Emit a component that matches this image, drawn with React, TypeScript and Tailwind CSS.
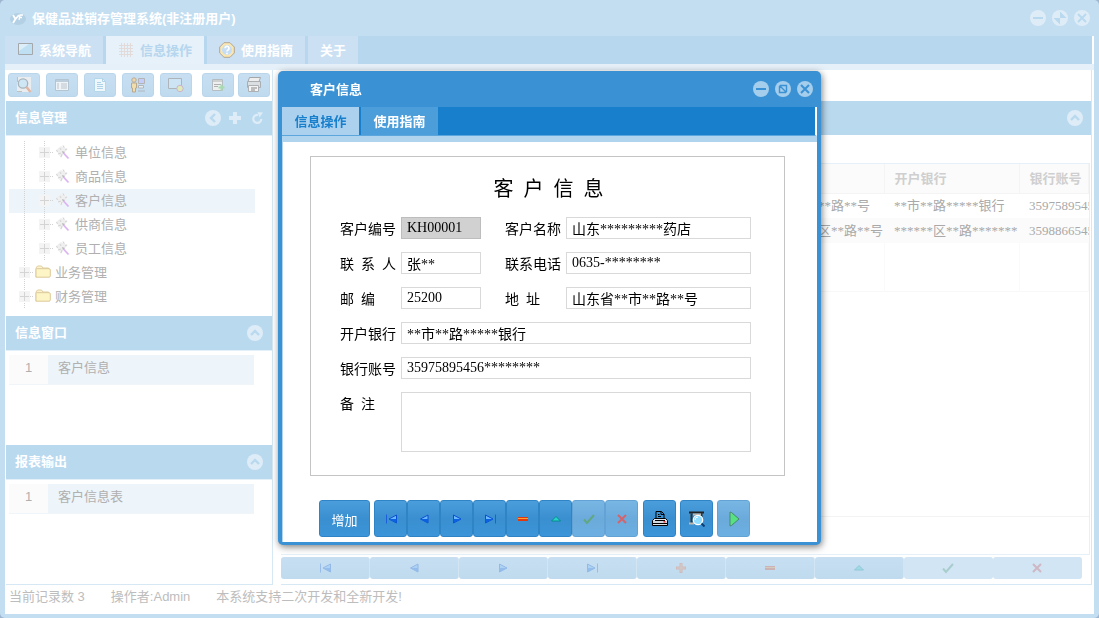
import { useId, type ReactNode } from "react";

const UI_FONT = "font-['Liberation_Sans','Noto_Sans_CJK_SC',sans-serif]";
const DATA_FONT = "font-['Liberation_Serif','Noto_Sans_CJK_SC',serif]";

/* ---------- round window controls ---------- */

type GlyphName = "minus" | "restore" | "maximize" | "close" | "up" | "left";

const glyphs: Record<GlyphName, ReactNode> = {
  minus: <path d="M3 8h10" strokeWidth="2" />,
  restore: <path d="M5 4.5h6.500V11M4.500 5v6.500H11M4.500 4.500l7 7" strokeWidth="1.4" />,
  maximize: (
    <g fill="currentColor" stroke="none">
      <path d="M8 1.500V8h6.500zM8 14.500V8H1.500z" />
    </g>
  ),
  close: <path d="M4 4l8 8M12 4l-8 8" strokeWidth="2" />,
  up: <path d="M4 10l4-4 4 4" strokeWidth="2.4" />,
  left: <path d="M10 4L6 8l4 4" strokeWidth="2.4" />,
};

function RoundButton({ glyph, label, tone }: { glyph: GlyphName; label: string; tone: string }) {
  return (
    <button type="button" aria-label={label} className={`size-4 shrink-0 ${tone}`}>
      <svg viewBox="0 0 16 16" className="size-4" fill="none" stroke="currentColor">
        <circle cx="8" cy="8" r="8" className="fill-[var(--disc)]" stroke="none" />
        {glyphs[glyph]}
      </svg>
    </button>
  );
}

const PALE = "text-[#b9d9ef] [--disc:#deecf7]";
const STRONG = "text-[#3a92d4] [--disc:#a5cdec]";

/* ---------- record navigation icons ---------- */

const navIcons: Record<string, ReactNode> = {
  first: (
    <>
      <path d="M3.500 3.500v9" stroke="#1c5fd8" />
      <path d="M13.500 4v8L6 8z" fill="#69b7ff" stroke="#0a4fcf" />
      <path d="M13.500 8v4L6 8z" fill="#0a62e0" />
    </>
  ),
  prev: (
    <>
      <path d="M12 4v8L4.500 8z" fill="#69b7ff" stroke="#0a4fcf" />
      <path d="M12 8v4L4.500 8z" fill="#0a62e0" />
    </>
  ),
  next: (
    <>
      <path d="M4.500 4v8L12 8z" fill="#69b7ff" stroke="#0a4fcf" />
      <path d="M4.500 8v4L12 8z" fill="#0a62e0" />
    </>
  ),
  last: (
    <>
      <path d="M13.500 3.500v9" stroke="#1c5fd8" />
      <path d="M3.500 4v8L11 8z" fill="#69b7ff" stroke="#0a4fcf" />
      <path d="M3.500 8v4L11 8z" fill="#0a62e0" />
    </>
  ),
  add: (
    <>
      <path d="M8 3v10M3 8h10" stroke="#ff5a1e" strokeWidth="3" />
      <path d="M8 4v8M4 8h8" stroke="#ffa060" />
    </>
  ),
  remove: (
    <g shapeRendering="crispEdges">
      <rect x="3" y="6" width="10" height="4" fill="#e03a0c" />
      <rect x="3" y="7" width="10" height="1" fill="#ffa030" />
    </g>
  ),
  edit: <path d="M8 5.500l4.500 4.500h-9z" fill="#27d3c8" stroke="#078a90" />,
  post: <path d="M3 8.500L6 12l7-8" fill="none" stroke="#2d8a58" strokeWidth="2" />,
  cancel: <path d="M4 4l8 8M12 4l-8 8" stroke="#c8303a" strokeWidth="2" />,
};

function NavIcon({ name, faded }: { name: string; faded?: boolean }) {
  return (
    <svg viewBox="0 0 16 16" aria-hidden="true" className={faded ? "size-4 opacity-25" : "size-4"}>
      {navIcons[name]}
    </svg>
  );
}

function PrinterIcon() {
  return (
    <svg viewBox="0 0 16 16" className="size-4" aria-hidden="true">
      <path d="M4 8V.5h5.500L12 3v5z" fill="#3a92d4" stroke="#000" />
      <path d="M9 1v2.500h3M6 3.500h1.500M6 5.500h3" fill="none" stroke="#000" />
      <path d="M2.500 7.500h11l2 2v5H.5v-5z" fill="#dfe4ea" stroke="#000" />
      <path d="M1 12.500h14M3 9.500h10" stroke="#000" />
      <path d="M1 11h14" stroke="#c5ccd6" />
      <rect x="11.500" y="10" width="2" height="1.500" fill="#e33" />
    </svg>
  );
}

function PreviewIcon() {
  return (
    <svg viewBox="0 0 16 16" className="size-4" aria-hidden="true">
      <path d="M0 1.500h15" stroke="#222" strokeWidth="2" />
      <path d="M2.500 2.500v10M12.500 2v4" stroke="#333" strokeWidth="2" />
      <path d="M4 3.500h8M0 12.500h5" stroke="#bdb7b0" strokeWidth="2" />
      <circle cx="9" cy="9" r="4.700" fill="#8fdcff" stroke="#fff" strokeWidth="1.200" />
      <path d="M6 9a3 3 0 0 1 3-3" stroke="#fff" fill="none" />
      <path d="M12.500 12.500l3 3" stroke="#0b3f74" strokeWidth="2" />
    </svg>
  );
}

function PlayIcon() {
  return (
    <svg viewBox="0 0 16 16" className="size-4" aria-hidden="true">
      <path d="M4 1v14l1.500-.5L13 8 5.500 1.500z" fill="#1fd858" stroke="#10603f" />
    </svg>
  );
}

/* ---------- toolbar icons ---------- */

const toolIcons: { label: string; icon: ReactNode }[] = [
  {
    label: "查询",
    icon: (
      <>
        <path d="M1 0h14v15H1z" fill="#e9edef" />
        <circle cx="7" cy="6.500" r="4.700" fill="#cfe6f5" stroke="#a8b4bc" strokeWidth="1.300" />
        <path d="M10.500 10l4 5" stroke="#e2b4a2" strokeWidth="2.400" />
        <path d="M1.500 0v5M1 14.500h5" stroke="#c0c0c0" />
      </>
    ),
  },
  {
    label: "列表",
    icon: (
      <>
        <path d="M1.500 2.500h13v11h-13z" fill="#eef3f7" stroke="#b3c4d2" />
        <path d="M2 4h12" stroke="#bccddb" strokeWidth="2" />
        <path d="M3 7h2M3 9h2M3 11h2M7 7h6M7 9h6M7 11h6" stroke="#bcc4cb" />
      </>
    ),
  },
  {
    label: "文档",
    icon: (
      <>
        <path d="M2.500 1.500h8l3 3v10h-11z" fill="#eef7fb" stroke="#b4d7ea" />
        <path d="M10.500 1.500v3h3M5 5.500h4M5 7.500h6M5 9.500h6M5 11.500h6" stroke="#aed3e8" fill="none" />
      </>
    ),
  },
  {
    label: "用户",
    icon: (
      <>
        <path d="M8.500 1.500h6v5h-6z" fill="#c5cdfb" stroke="#b4b4b4" />
        <circle cx="4" cy="3" r="2.200" fill="#efd6a8" stroke="#b5ac9d" />
        <path d="M1.500 6h5v5h-1v4h-3v-4h-1z" fill="#f1dcae" stroke="#b9a98d" />
        <path d="M8.500 8.500h5v2.500H8.500zM8 14h7" stroke="#b1b6bc" fill="#e8edf0" />
      </>
    ),
  },
  {
    label: "预览",
    icon: (
      <>
        <path d="M.5 1.500h13v10H.5z" fill="#cce4f3" stroke="#aeb5ba" />
        <circle cx="12" cy="11.500" r="3.200" fill="#e0e9b8" stroke="#cbb3cf" />
      </>
    ),
  },
  {
    label: "导出",
    icon: (
      <>
        <path d="M2.500 2.500h10v11h-10z" fill="#eef0f0" stroke="#b5bcc2" />
        <path d="M3 4h9M4 7.500h7M4 9.500h4" stroke="#b0b0b0" />
        <path d="M11.500 7.500v6M8.500 10.500h6" stroke="#a6dcae" strokeWidth="2" />
      </>
    ),
  },
  {
    label: "打印",
    icon: (
      <>
        <path d="M3.500.5h11l-1.500 4H2z" fill="#eee" stroke="#a3a7aa" />
        <path d="M1.500 4.500h13v6h-13z" fill="#dcdfe1" stroke="#a9aeb2" />
        <path d="M2.500 8.500h10v6h-10z" fill="#f4f4f4" stroke="#adb1b5" />
        <path d="M5 11h6M5 13h4" stroke="#aaa" strokeWidth="1.500" />
      </>
    ),
  },
];

function ToolButton({ index }: { index: number }) {
  const tool = toolIcons[index];
  return (
    <button
      type="button"
      aria-label={tool.label}
      className="flex h-6 w-8 items-center justify-center rounded-[3px] border border-[#b9d6eb] bg-linear-to-b from-[#c8dff2] to-[#bfdaee]"
    >
      <svg viewBox="0 0 16 16" className="size-4" aria-hidden="true">
        {tool.icon}
      </svg>
    </button>
  );
}

/* ---------- main window tabs ---------- */

function MainTab({ label, icon, active }: { label: string; icon?: ReactNode; active?: boolean }) {
  return (
    <button
      type="button"
      role="tab"
      aria-selected={!!active}
      className={`flex h-full items-center gap-1.5 px-3 text-[13px] font-bold ${
        active ? "bg-[#e6f1f9] text-[#b5d6ee]" : "bg-[#cbe1f3] text-white"
      }`}
    >
      {icon}
      <span className="pt-0.5">{label}</span>
    </button>
  );
}

const navIcon = (
  <svg viewBox="0 0 16 16" className="size-4" aria-hidden="true">
    <path d="M1.500 1.500h14v11h-14z" fill="#bfe0f2" stroke="#a4a8ab" />
    <path d="M2 2h10L2 9z" fill="#dceef7" />
  </svg>
);
const gridIcon = (
  <svg viewBox="0 0 16 16" className="size-4" aria-hidden="true">
    <path
      d="M1 3.500h14M1 6.500h14M1 9.500h14M1 12.500h14M3.500 1v14M6.500 1v14M9.500 1v14M12.500 1v14"
      stroke="#e2dbda"
    />
  </svg>
);
const helpIcon = (
  <svg viewBox="0 0 16 16" className="size-4" aria-hidden="true">
    <path d="M5 .7h6L15.300 5v6L11 15.300H5L.7 11V5z" fill="#fae6b0" stroke="#b0a698" />
    <circle cx="8" cy="8" r="5" fill="#c5def5" />
    <path d="M6 6.300a2 2 0 1 1 3 1.700q-1 .5-1 1.500M8 10.800v1.500" stroke="#fff" strokeWidth="1.700" fill="none" />
  </svg>
);

/* ---------- sidebar ---------- */

function PanelHeader({ title, children }: { title: string; children: ReactNode }) {
  return (
    <header className="flex h-[35px] shrink-0 items-center justify-between border-b border-[#e4f0f9] bg-[#b9d9ef] px-[9px] text-[13px] text-white">
      <h2 className="font-bold">{title}</h2>
      <div className="flex items-center gap-2">{children}</div>
    </header>
  );
}

function Expander() {
  return (
    <svg viewBox="0 0 15 24" className="h-6 w-[15px] shrink-0" aria-hidden="true" shapeRendering="crispEdges">
      <path d="M5.500 0v24" stroke="#d2d2d2" strokeDasharray="1 1" />
      <rect x="0" y="6" width="11" height="11" fill="#f4f4f4" />
      <path d="M5.500 7v9M1 11.500h9" stroke="#d4d4d4" />
      <path d="M11 11.500h3" stroke="#d2d2d2" strokeDasharray="1 1" />
    </svg>
  );
}

function WandIcon() {
  return (
    <svg viewBox="0 0 16 16" className="size-4 shrink-0" aria-hidden="true">
      <path d="M1 5l5-4 2 1 1-2 1 3 3 1-3 3-4 6z" fill="#efefef" />
      <path d="M1 5.500l2 1M5 3l1 2M8 .5l1 2M3 9l3-1M6 12l1-3M12 4l-2 1" stroke="#d4d4d4" />
      <path d="M7 6l3 1-2 2z" fill="#b8b8b8" />
      <path d="M8.500 8l5 5.500" stroke="#dcb4f2" strokeWidth="1.800" />
    </svg>
  );
}

function FolderIcon() {
  return (
    <svg viewBox="0 0 16 16" className="size-4 shrink-0" aria-hidden="true">
      <path d="M1 12.500V3l1.500-2h4L8 3h5.500v2" fill="#fbf3cf" stroke="#e0cf9f" />
      <path d="M1 12V4.500q0-.8.8-.8H14q1.300 0 1.300 1.200v6q0 1.300-1.300 1.300H2z" fill="#fdf5c6" stroke="#dcc99a" />
    </svg>
  );
}

const leaves = ["单位信息", "商品信息", "客户信息", "供商信息", "员工信息"];

function Tree() {
  return (
    <ul className="h-[180px] shrink-0 pt-[5px] pr-[17px] pl-[3px] text-[13px] text-[#b0b0b0]">
      {leaves.map((leaf) => (
        <li key={leaf} className={`flex h-6 items-center pl-2.5 ${leaf === "客户信息" ? "bg-[#edf4fa]" : ""}`}>
          <svg viewBox="0 0 20 24" className="h-6 w-5 shrink-0" aria-hidden="true" shapeRendering="crispEdges">
            <path d="M5.500 0v24" stroke="#d2d2d2" strokeDasharray="1 1" />
          </svg>
          <Expander />
          <span className="flex items-center gap-1 pl-px">
            <WandIcon />
            {leaf}
          </span>
        </li>
      ))}
      {["业务管理", "财务管理"].map((folder) => (
        <li key={folder} className="flex h-6 items-center pl-2.5">
          <Expander />
          <span className="flex items-center gap-1 pl-px">
            <FolderIcon />
            {folder}
          </span>
        </li>
      ))}
    </ul>
  );
}

function NumberedRow({ text }: { text: string }) {
  return (
    <ol className="mt-1 mr-[18px] ml-[3px] text-[13px] text-[#b0b0b0]">
      <li className="flex h-[30px] items-stretch border-b border-[#f0f5fa] leading-[26px]">
        <span className="w-[39px] bg-[#fbfbfb] text-center">1</span>
        <span className="flex-1 bg-[#edf4fa] pl-2.5">{text}</span>
      </li>
    </ol>
  );
}

function Sidebar() {
  return (
    <aside className="flex w-[267px] shrink-0 flex-col border-r border-b border-[#d7e8f5]">
      <div className="flex h-[31px] shrink-0 items-center justify-between pr-0.5 pb-px pl-0.5">
        <div className="flex gap-1.5">
          {[0, 1, 2, 3, 4].map((i) => (
            <ToolButton key={i} index={i} />
          ))}
        </div>
        <div className="flex gap-1">
          <ToolButton index={5} />
          <ToolButton index={6} />
        </div>
      </div>
      <PanelHeader title="信息管理">
        <RoundButton glyph="left" label="返回" tone={PALE} />
        <button type="button" aria-label="添加">
          <svg viewBox="0 0 12 12" className="size-3">
            <path d="M6 0v12M0 6h12" stroke="#deecf7" strokeWidth="4" />
          </svg>
        </button>
        <button type="button" aria-label="刷新" className="pl-0.5">
          <svg viewBox="0 0 12 12" className="size-3" fill="none">
            <path d="M7 3a4 4 0 1 0 3.300 4" stroke="#deecf7" strokeWidth="2.200" />
            <path d="M6.500 0L12 .5 8.500 5.500z" fill="#deecf7" />
          </svg>
        </button>
      </PanelHeader>
      <Tree />
      <PanelHeader title="信息窗口">
        <RoundButton glyph="up" label="收起信息窗口" tone={PALE} />
      </PanelHeader>
      <div className="h-[94px] shrink-0">
        <NumberedRow text="客户信息" />
      </div>
      <PanelHeader title="报表输出">
        <RoundButton glyph="up" label="收起报表输出" tone={PALE} />
      </PanelHeader>
      <div className="flex-1">
        <NumberedRow text="客户信息表" />
      </div>
    </aside>
  );
}

/* ---------- record table ---------- */

const records = [
  { address: "山东省**市**路**号", bank: "**市**路*****银行", account: "35975895456********" },
  { address: "山东省**市区**路**号", bank: "******区**路*******", account: "35988665456********" },
];

const navNames: [string, string][] = [
  ["first", "首条"],
  ["prev", "上一条"],
  ["next", "下一条"],
  ["last", "末条"],
  ["add", "新增"],
  ["remove", "删除"],
  ["edit", "编辑"],
  ["post", "保存"],
  ["cancel", "取消"],
];

const HEAD_CELL = "overflow-hidden border-r border-b border-[#f4f4f4] pl-2.5 font-bold";
const BODY_CELL = "overflow-hidden pl-2.5 leading-5";
const BLANK_CELL = "border-r border-[#fafafa]";

function RecordPanel() {
  return (
    <section className="flex min-w-0 flex-1 flex-col border-r border-b border-[#d7e8f5] pt-[31px]">
      <header className="flex h-[34px] shrink-0 items-center justify-end bg-[#b9d9ef] pr-2">
        <RoundButton glyph="up" label="收起" tone={PALE} />
      </header>
      <div className="mt-7 mr-px flex-1 overflow-hidden border-t border-r border-b border-[#e6f0f8]">
        <div className="h-[353px] border-b border-[#f3f3f3]">
          <table className="w-full table-fixed border-collapse text-left text-[13px] whitespace-nowrap text-[#a9a9a9]">
            <colgroup>
              <col className="w-[462px]" />
              <col className="w-[141px]" />
              <col className="w-[135px]" />
              <col />
            </colgroup>
            <thead className="bg-[#fbfbfb] text-[#cfcfcf]">
              <tr className="h-[29px]">
                <td className={HEAD_CELL} />
                <th className={HEAD_CELL}>地址</th>
                <th className={HEAD_CELL}>开户银行</th>
                <th className={HEAD_CELL}>银行账号</th>
              </tr>
            </thead>
            <tbody className={DATA_FONT}>
              {records.map((r) => (
                <tr key={r.account} className="h-[25px] even:bg-[#fbfbfb]">
                  <td className={BODY_CELL} />
                  <td className={BODY_CELL}>{r.address}</td>
                  <td className={BODY_CELL}>{r.bank}</td>
                  <td className={BODY_CELL}>{r.account}</td>
                </tr>
              ))}
              <tr className="h-12 border-b border-[#f8f8f8]">
                <td className={BLANK_CELL} />
                <td className={BLANK_CELL} />
                <td className={BLANK_CELL} />
                <td className={BLANK_CELL} />
              </tr>
            </tbody>
          </table>
        </div>
      </div>
      <div className="mt-0.5 mr-[9px] mb-[5px] flex h-[22px] shrink-0">
        {navNames.map(([name, label], i) => (
          <button
            key={name}
            type="button"
            aria-label={label}
            className={`flex flex-1 items-center justify-center rounded-[3px] border-r border-[#d2e5f4] ${
              i > 6 ? "bg-[#d2e5f4]" : "bg-linear-to-b from-[#c8dff2] to-[#bfdaee]"
            }`}
          >
            <NavIcon name={name} faded />
          </button>
        ))}
      </div>
    </section>
  );
}

/* ---------- customer dialog ---------- */

const LABEL = "w-[61px] shrink-0 pt-1 leading-[18px] whitespace-pre";

function Field({ label, value, width, readOnly }: { label: string; value: string; width: string; readOnly?: boolean }) {
  const id = useId();
  return (
    <div className={`flex h-[22px] ${width}`}>
      <label htmlFor={id} className={LABEL}>
        {label}
      </label>
      <input
        id={id}
        defaultValue={value}
        readOnly={readOnly}
        className={`h-[22px] w-full min-w-0 border px-[5px] leading-5 outline-none ${
          readOnly ? "border-[#bdbdbd] bg-[#d1d1d1]" : "border-[#d9d9d9] bg-white"
        }`}
      />
    </div>
  );
}

const BLUE_BUTTON =
  "flex h-[37px] items-center justify-center rounded-[3px] border border-[#2f84c6] bg-linear-to-b from-[#4b9edb] from-0% via-[#3a8fd0] via-50% to-[#3b95d8] to-100%";

function CustomerDialog() {
  const noteId = useId();
  return (
    <div className="fixed inset-0 grid place-items-center pb-0.5">
      <div
        role="dialog"
        aria-label="客户信息"
        className="w-[543px] rounded-[5px] bg-[#3a92d4] px-1 pb-[3px] shadow-[1px_2px_7px_rgba(0,0,0,0.5)]"
      >
        <header className="flex h-9 items-center justify-between pr-1 pl-7">
          <h1 className="pt-0.5 text-[13px] font-bold text-white">客户信息</h1>
          <div className="flex gap-1.5">
            <RoundButton glyph="minus" label="最小化" tone={STRONG} />
            <RoundButton glyph="restore" label="还原" tone={STRONG} />
            <RoundButton glyph="close" label="关闭" tone={STRONG} />
          </div>
        </header>
        <div
          role="tablist"
          className="flex h-[29px] gap-0.5 border-r-2 border-b border-r-white border-b-[#5aa6dd] bg-[#177fcc] text-[13px] font-bold"
        >
          <button type="button" role="tab" aria-selected="true" className="w-[77px] bg-[#abd1ee] pt-0.5 text-[#177fcc]">
            信息操作
          </button>
          <button type="button" role="tab" aria-selected="false" className="w-[77px] bg-[#4c9edb] pt-0.5 text-white">
            使用指南
          </button>
        </div>
        <div className="border-t-[6px] border-l border-t-[#b0d3ee] border-l-[#b0d3ee] bg-white pt-3.5 pb-[5px]">
          <form className={`mr-8 ml-[27px] h-80 border border-[#c4c4c4] pr-[33px] pl-[29px] text-sm text-black ${DATA_FONT}`}>
            <h2 className="pt-4 pl-1.5 text-center text-xl leading-8 whitespace-pre">客  户  信  息</h2>
            <div className="flex flex-col gap-[13px] pt-3">
              <div className="flex gap-6">
                <Field label="客户编号" value="KH00001" width="w-[141px] shrink-0" readOnly />
                <Field label="客户名称" value="山东*********药店" width="flex-1" />
              </div>
              <div className="flex gap-6">
                <Field label="联  系  人" value="张**" width="w-[141px] shrink-0" />
                <Field label="联系电话" value="0635-********" width="flex-1" />
              </div>
              <div className="flex gap-6">
                <Field label="邮  编" value="25200" width="w-[141px] shrink-0" />
                <Field label="地  址" value="山东省**市**路**号" width="flex-1" />
              </div>
              <Field label="开户银行" value="**市**路*****银行" width="w-full" />
              <Field label="银行账号" value="35975895456********" width="w-full" />
              <div className="flex">
                <label htmlFor={noteId} className={LABEL}>
                  备  注
                </label>
                <textarea
                  id={noteId}
                  className="h-[60px] min-w-0 flex-1 resize-none border border-[#d9d9d9] px-[5px] outline-none"
                />
              </div>
            </div>
          </form>
          <div className="mt-6 ml-9 flex gap-1">
            <button type="button" className={`${BLUE_BUTTON} w-[51px] pt-1 text-[13px] text-white`}>
              增加
            </button>
            <div className="mr-px flex">
              {navNames
                .filter(([name]) => name !== "add")
                .map(([name, label], i) => (
                  <button
                    key={name}
                    type="button"
                    aria-label={label}
                    disabled={i > 5}
                    className={`${BLUE_BUTTON} w-[33px] ${i > 5 ? "opacity-75" : ""}`}
                  >
                    <NavIcon name={name} />
                  </button>
                ))}
            </div>
            <button type="button" aria-label="打印" className={`${BLUE_BUTTON} w-[33px]`}>
              <PrinterIcon />
            </button>
            <button type="button" aria-label="打印预览" className={`${BLUE_BUTTON} w-[33px]`}>
              <PreviewIcon />
            </button>
            <button type="button" aria-label="运行" className={`${BLUE_BUTTON} w-[33px] opacity-75`}>
              <PlayIcon />
            </button>
          </div>
        </div>
      </div>
    </div>
  );
}

/* ---------- application window ---------- */

export default function App() {
  return (
    <div className={`min-h-screen bg-[#9fb6d0] ${UI_FONT}`}>
      <div className="flex min-h-screen flex-col rounded-[5px] bg-[#c3def1] px-[5px] pb-1">
        <header className="flex h-9 shrink-0 items-center justify-between pr-1 pl-[5px]">
          <div className="flex items-center gap-1.5">
            <svg viewBox="0 0 16 16" className="size-4" aria-hidden="true">
              <ellipse cx="8" cy="9" rx="8" ry="6" fill="#b3d0e5" />
              <path d="M3 5l2.500 4L9 5M5.500 9L3 13" fill="none" stroke="#fff" strokeWidth="1.800" />
              <path d="M13 5h-3l-1 5M9 7.500h3" fill="none" stroke="#fff" strokeWidth="1.300" />
            </svg>
            <span className="pt-0.5 text-[13px] font-bold text-white">保健品进销存管理系统(非注册用户)</span>
          </div>
          <div className="flex gap-1.5">
            <RoundButton glyph="minus" label="最小化" tone={PALE} />
            <RoundButton glyph="maximize" label="最大化" tone={PALE} />
            <RoundButton glyph="close" label="关闭" tone={PALE} />
          </div>
        </header>
        <nav role="tablist" className="flex h-7 shrink-0 gap-[3px] border-r-2 border-white bg-[#b7d7ee]">
          <MainTab label="系统导航" icon={navIcon} />
          <MainTab label="信息操作" icon={gridIcon} active />
          <MainTab label="使用指南" icon={helpIcon} />
          <MainTab label="关于" />
        </nav>
        <main className="flex flex-1 flex-col border-t-[6px] border-t-[#e5f0f9] bg-white">
          <div className="flex flex-1 gap-2 pr-0.5 pl-px">
            <Sidebar />
            <RecordPanel />
          </div>
          <footer className="flex h-[29px] shrink-0 gap-[26px] pl-1 text-[13px] leading-6 text-[#bdbdbd]">
            <span>当前记录数 3</span>
            <span>操作者:Admin</span>
            <span>本系统支持二次开发和全新开发!</span>
          </footer>
        </main>
      </div>
      <CustomerDialog />
    </div>
  );
}
